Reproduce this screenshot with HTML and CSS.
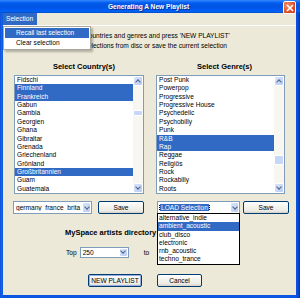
FILE: index.html
```html
<!DOCTYPE html>
<html lang="en">
<head>
    <meta charset="UTF-8">
    <title>Generating A New Playlist</title>
    <link rel="stylesheet" href="styles.css">
</head>
<body>
    <div class="window">
        <div class="titlebar">
            <span class="title">Generating A New Playlist</span>
            <span class="close-btn">
                <svg width="8" height="8" viewBox="0 0 8 8"><path d="M1 1L7 7M7 1L1 7" stroke="#fff" stroke-width="1.6"/></svg>
            </span>
        </div>
        <div class="frame-body">
            <div class="menubar">
                <div class="menu-item active">
                    Selection
                    <!-- open popup of the Selection menu -->
                    <div class="menu-popup">
                        <div class="popup-item hot">Recall last selection</div>
                        <div class="popup-item">Clear selection</div>
                    </div>
                </div>
            </div>
            <div class="client">
                <div class="intro">
                    <div>Select countries and genres and press 'NEW PLAYLIST'</div>
                    <div>Load selections from disc or save the current selection</div>
                </div>
                <div class="columns">
                    <div class="col col-country">
                        <h2>Select Country(s)</h2>
                        <div class="listbox">
                            <div class="rows">
                                <div class="row">Fidschi</div>
                                <div class="row sel">Finnland</div>
                                <div class="row sel">Frankreich</div>
                                <div class="row">Gabun</div>
                                <div class="row">Gambia</div>
                                <div class="row">Georgien</div>
                                <div class="row">Ghana</div>
                                <div class="row">Gibraltar</div>
                                <div class="row">Grenada</div>
                                <div class="row">Griechenland</div>
                                <div class="row">Grönland</div>
                                <div class="row sel">Großbritannien</div>
                                <div class="row">Guam</div>
                                <div class="row">Guatemala</div>
                            </div>
                            <div class="scrollbar">
                                <span class="sb-btn up"></span>
                                <span class="sb-track"><span class="sb-thumb thumb-country"></span></span>
                                <span class="sb-btn down"></span>
                            </div>
                        </div>
                        <div class="actions">
                            <div class="combo combo-save">
                                <span class="combo-text">germany_france_brita</span>
                                <span class="combo-arrow"></span>
                            </div>
                            <button class="btn">Save</button>
                        </div>
                    </div>
                    <div class="col col-genre">
                        <h2>Select Genre(s)</h2>
                        <div class="listbox">
                            <div class="rows">
                                <div class="row">Post Punk</div>
                                <div class="row">Powerpop</div>
                                <div class="row">Progressive</div>
                                <div class="row">Progressive House</div>
                                <div class="row">Psychedelic</div>
                                <div class="row">Psychobilly</div>
                                <div class="row">Punk</div>
                                <div class="row sel">R&amp;B</div>
                                <div class="row sel">Rap</div>
                                <div class="row">Reggae</div>
                                <div class="row">Religiös</div>
                                <div class="row">Rock</div>
                                <div class="row">Rockabilly</div>
                                <div class="row">Roots</div>
                            </div>
                            <div class="scrollbar">
                                <span class="sb-btn up"></span>
                                <span class="sb-track"><span class="sb-thumb thumb-genre"></span></span>
                                <span class="sb-btn down"></span>
                            </div>
                        </div>
                        <div class="actions">
                            <div class="combo combo-load">
                                <span class="combo-text"><span class="focus-text">LOAD Selection</span></span>
                                <span class="combo-arrow"></span>
                                <!-- dropped down list -->
                                <div class="drop-list">
                                    <div class="drop-row">alternative_indie</div>
                                    <div class="drop-row sel">ambient_acoustic</div>
                                    <div class="drop-row">club_disco</div>
                                    <div class="drop-row">electronic</div>
                                    <div class="drop-row">rnb_acoustic</div>
                                    <div class="drop-row">techno_trance</div>
                                </div>
                            </div>
                            <button class="btn">Save</button>
                        </div>
                    </div>
                </div>
                <div class="dir-label">MySpace artists directory</div>
                <div class="range">
                    <span>Top</span>
                    <div class="combo combo-top">
                        <span class="combo-text">250</span>
                        <span class="combo-arrow"></span>
                    </div>
                    <span class="to-label">to</span>
                </div>
                <div class="buttons">
                    <button class="btn btn-default">NEW PLAYLIST</button>
                    <button class="btn btn-cancel">Cancel</button>
                </div>
            </div>
        </div>
    </div>
</body>
</html>
```

FILE: styles.css
```css
html, body {
    margin: 0;
    padding: 0;
    background: #0a4fdc;
    font-family: "Liberation Sans", Arial, sans-serif;
    font-size: 6.6px;
    color: #000;
}
.window {
    width: 300px;
    height: 298px;
    display: flex;
    flex-direction: column;
    background: linear-gradient(to right, #0841c8 0, #166aee 1px, #0a55e2 3px, #0a55e2 296px, #0b49d6 298px, #0033a8 300px);
}
/* Title bar */
.titlebar {
    height: 13px;
    position: relative;
    display: flex;
    align-items: center;
    justify-content: center;
    background: linear-gradient(to bottom, #3a8cff 0, #1e78fa 8%, #0059ec 25%, #0054e3 55%, #005bf5 75%, #0262f0 88%, #0048c4 100%);
}
.title {
    color: #fff;
    font-weight: bold;
    font-size: 6.6px;
    margin-left: -3px;
    text-shadow: 1px 1px 0 #0a2c8c;
}
.close-btn {
    position: absolute;
    top: 1px;
    right: 4px;
    width: 11px;
    height: 11px;
    border: 1px solid #fff;
    border-radius: 2px;
    background: radial-gradient(circle at 30% 30%, #f0916d, #d9471f 70%);
    display: flex;
    align-items: center;
    justify-content: center;
}
.frame-body {
    flex: 1;
    margin: 0 4px 3px 3px;
    display: flex;
    flex-direction: column;
    background: #ece9d8;
}
/* Menu bar */
.menubar {
    height: 12px;
    border-bottom: 1px solid #fff;
    display: flex;
    position: relative;
    z-index: 20;
}
.menu-item {
    position: relative;
    padding: 0 3px;
    line-height: 12px;
}
.menu-item.active {
    background: #316ac5;
    color: #fff;
    width: 28px;
}
.menu-popup {
    position: absolute;
    top: 13px;
    left: 0;
    width: 84px;
    padding: 1px;
    background: #fff;
    color: #000;
    border: 1px solid #aca899;
    box-shadow: 2px 2px 2px rgba(0,0,0,0.25);
}
.popup-item {
    height: 10px;
    line-height: 10px;
    padding-left: 11px;
}
.popup-item.hot {
    background: #316ac5;
    color: #fff;
}
/* Client area */
.client {
    flex: 1;
    display: flex;
    flex-direction: column;
}
.intro {
    padding-top: 5px;
    line-height: 10px;
    text-align: center;
    margin-left: -4px;
}
.columns {
    display: flex;
    gap: 11px;
    margin-top: 11px;
    padding-left: 10px;
}
.col {
    display: flex;
    flex-direction: column;
}
.col-country { width: 132px; }
.col-genre { width: 133px; }
.col h2 {
    margin: 0 0 4px 0;
    font-size: 7.5px;
    line-height: 9px;
    font-weight: bold;
    text-align: center;
}
.col-country h2 { padding-left: 10px; }
.col-genre h2 { padding-left: 4px; }
.listbox {
    height: 117px;
    border: 1px solid #7f9db9;
    background: #fff;
    display: flex;
}
.col-country .listbox { width: 128px; margin-left: 1px; }
.col-genre .listbox { width: 127px; }
.rows {
    flex: 1;
    overflow: hidden;
}
.row {
    height: 8.36px;
    line-height: 8.36px;
    padding-left: 2px;
    white-space: nowrap;
}
.row.sel {
    background: #316ac5;
    color: #fff;
}
/* XP scroll bar */
.scrollbar {
    width: 10px;
    display: flex;
    flex-direction: column;
    background: #f7f6f1;
}
.sb-btn {
    height: 10px;
    box-sizing: border-box;
    border: 1px solid #fff;
    border-radius: 2px;
    background: linear-gradient(135deg, #dbe5fb, #b8cbf5) ;
    display: flex;
    align-items: center;
    justify-content: center;
}
.sb-btn::after {
    content: "";
    width: 3px;
    height: 3px;
    border-left: 1.3px solid #4d6185;
    border-top: 1.3px solid #4d6185;
}
.sb-btn.up::after { transform: translateY(1px) rotate(45deg); }
.sb-btn.down::after { transform: translateY(-1px) rotate(225deg); }
.sb-track {
    flex: 1;
    position: relative;
}
.sb-thumb {
    position: absolute;
    left: 0;
    width: 10px;
    box-sizing: border-box;
    border: 1px solid #fff;
    border-radius: 2px;
    background: #c6d5f8;
}
.thumb-country { top: 24px; height: 6px; }
.thumb-genre { top: 69px; height: 10px; }
/* Combo boxes and buttons */
.actions {
    display: flex;
    margin-top: 7px;
    height: 13px;
}
.col-country .actions { gap: 6px; }
.col-genre .actions { gap: 3px; margin-left: 1px; }
.combo {
    position: relative;
    box-sizing: border-box;
    height: 13px;
    border: 1px solid #7f9db9;
    background: #fff;
    display: flex;
    align-items: center;
}
.combo-save { width: 79px; }
.combo-load { width: 83px; }
.combo-text {
    flex: 1;
    overflow: hidden;
    white-space: nowrap;
    padding-left: 2px;
}
.focus-text {
    background: #316ac5;
    color: #fff;
    outline: 1px dotted #000;
    padding: 0 1px;
}
.combo-arrow {
    width: 9px;
    height: 11px;
    box-sizing: border-box;
    border: 1px solid #fff;
    border-radius: 2px;
    background: linear-gradient(135deg, #dbe5fb, #b8cbf5);
    display: flex;
    align-items: center;
    justify-content: center;
}
.combo-arrow::after {
    content: "";
    width: 3px;
    height: 3px;
    border-left: 1.3px solid #4d6185;
    border-top: 1.3px solid #4d6185;
    transform: translateY(-1px) rotate(225deg);
}
.drop-list {
    position: absolute;
    top: 11px;
    left: -1px;
    width: 81px;
    border: 1px solid #000;
    background: #fff;
    z-index: 10;
}
.drop-row {
    height: 8.3px;
    line-height: 8.3px;
    padding-left: 1px;
    white-space: nowrap;
}
.drop-row.sel {
    background: #316ac5;
    color: #fff;
}
.btn {
    box-sizing: border-box;
    width: 46px;
    height: 13px;
    padding: 0;
    border: 1px solid #003c74;
    border-radius: 2px;
    background: linear-gradient(to bottom, #fff 0%, #f4f3ee 40%, #ecebe6 80%, #d6d0c5 100%);
    font-family: inherit;
    font-size: 6.6px;
    color: #000;
}
.dir-label {
    margin-top: 14px;
    padding-left: 62px;
    font-size: 7.5px;
    line-height: 9px;
    font-weight: bold;
}
.range {
    display: flex;
    align-items: center;
    height: 10px;
    margin-top: 10px;
    padding-left: 63px;
}
.combo-top {
    width: 49px;
    height: 11px;
    margin-left: 3px;
}
.combo-top .combo-arrow { height: 9px; }
.to-label { margin-left: 15px; }
.buttons {
    display: flex;
    gap: 15px;
    margin-top: 17px;
    padding-left: 85px;
}
.btn-default {
    width: 54px;
    box-shadow: inset 0 0 0 1px #97aee2;
}
.btn-cancel { width: 45px; }
```
